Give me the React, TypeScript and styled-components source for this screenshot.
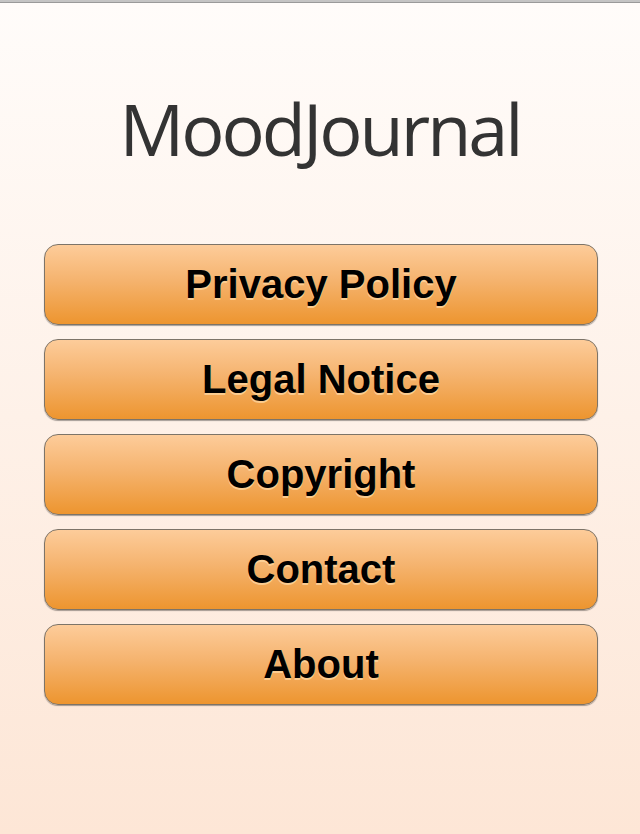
import React from "react";
import styled, { createGlobalStyle } from "styled-components";

const Global = createGlobalStyle`
  html, body { margin: 0; padding: 0; }
  body {
    min-height: 834px;
    background: linear-gradient(to bottom, #fffcf9 0%, #fde6d6 100%);
  }
`;

const Page = styled.div`
  min-height: 834px;
  display: flex;
  flex-direction: column;
  background: linear-gradient(to bottom, #fffcfa 0%, #fde6d6 100%);
`;

const TopBar = styled.div`
  height: 2px;
  background: #c4c4c4;
  border-bottom: 1px solid #9a9a9a;
`;

const Title = styled.h1`
  margin: 76px 0 0 0;
  height: 165px;
  font-family: "Open Sans", "DejaVu Sans", sans-serif;
  font-weight: 400;
  font-size: 72px;
  line-height: 98px;
  letter-spacing: -3px;
  color: #333333;
  text-align: center;
`;

const Menu = styled.nav`
  display: flex;
  flex-direction: column;
  gap: 14px;
  padding: 0 42px 0 44px;
`;

const MenuButton = styled.button`
  height: 81px;
  width: 100%;
  border: 1px solid #7d7468;
  border-radius: 14px;
  background: linear-gradient(to bottom, #fdcc9a 0%, #f5b36e 45%, #ed952f 100%);
  box-shadow: 0 1px 1px rgba(0, 0, 0, 0.35);
  font-family: "Liberation Sans", Arial, sans-serif;
  font-weight: 700;
  font-size: 40px;
  color: #000;
  text-shadow: 0 2px 0 rgba(255, 215, 160, 0.8);
  cursor: pointer;
  padding: 0;
`;

const items = ["Privacy Policy", "Legal Notice", "Copyright", "Contact", "About"];

export default function App() {
  return (
    <Page>
      <Global />
      <TopBar />
      <Title>MoodJournal</Title>
      <Menu>
        {items.map((t) => (
          <MenuButton key={t}>{t}</MenuButton>
        ))}
      </Menu>
    </Page>
  );
}
